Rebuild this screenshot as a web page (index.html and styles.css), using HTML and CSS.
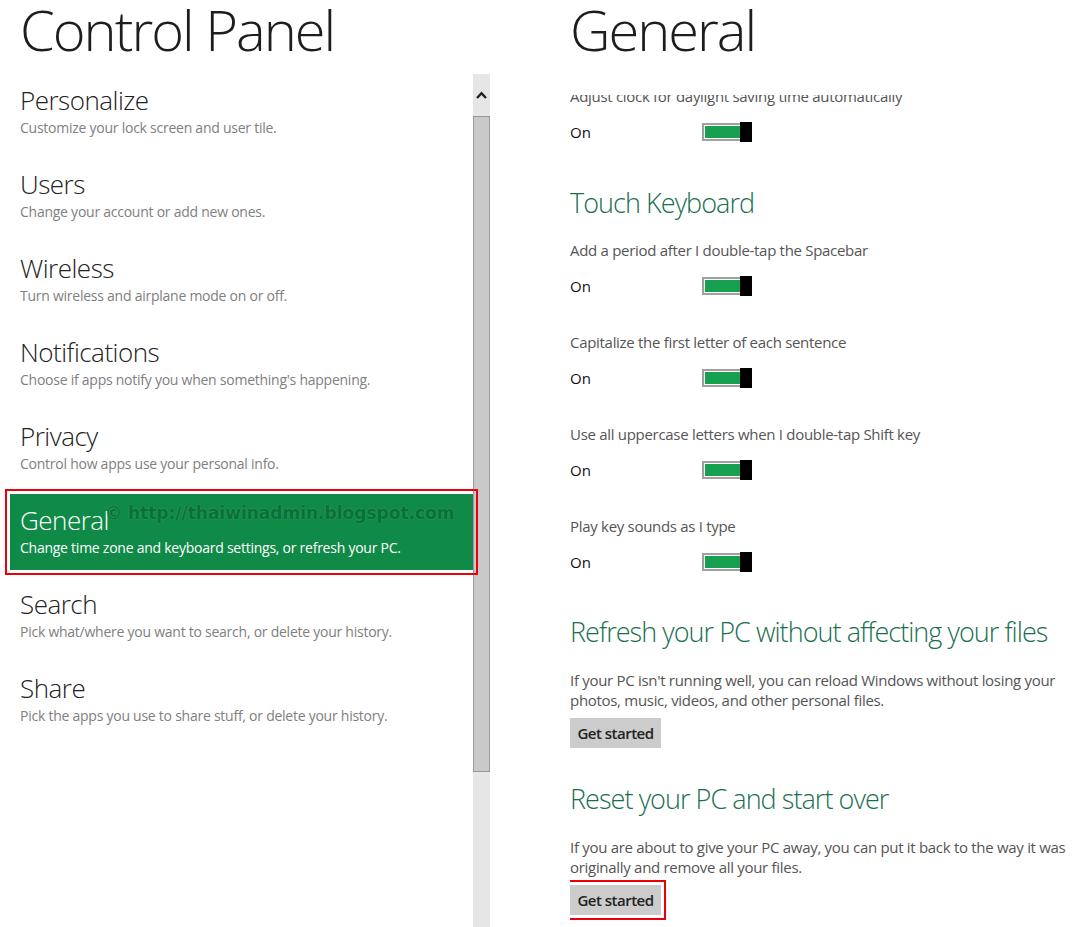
FILE: index.html
```html
<!DOCTYPE html>
<html lang="en">
<head>
    <meta charset="UTF-8">
    <title>Control Panel - General</title>
    <link rel="stylesheet" href="styles.css">
</head>
<body>
    <div class="page">
        <section class="pane pane-left">
            <h1 class="pane-title">Control Panel</h1>
            <div class="nav-wrap">
                <ul class="nav">
                    <li class="nav-item">
                        <div class="nav-name">Personalize</div>
                        <div class="nav-desc">Customize your lock screen and user tile.</div>
                    </li>
                    <li class="nav-item">
                        <div class="nav-name">Users</div>
                        <div class="nav-desc">Change your account or add new ones.</div>
                    </li>
                    <li class="nav-item">
                        <div class="nav-name">Wireless</div>
                        <div class="nav-desc">Turn wireless and airplane mode on or off.</div>
                    </li>
                    <li class="nav-item">
                        <div class="nav-name">Notifications</div>
                        <div class="nav-desc">Choose if apps notify you when something's happening.</div>
                    </li>
                    <li class="nav-item">
                        <div class="nav-name">Privacy</div>
                        <div class="nav-desc">Control how apps use your personal info.</div>
                    </li>
                    <li class="nav-item active">
                        <div class="nav-name">General</div>
                        <div class="nav-desc">Change time zone and keyboard settings, or refresh your PC.</div>
                        <span class="watermark">© http://thaiwinadmin.blogspot.com</span>
                    </li>
                    <li class="nav-item">
                        <div class="nav-name">Search</div>
                        <div class="nav-desc">Pick what/where you want to search, or delete your history.</div>
                    </li>
                    <li class="nav-item">
                        <div class="nav-name">Share</div>
                        <div class="nav-desc">Pick the apps you use to share stuff, or delete your history.</div>
                    </li>
                </ul>
                <div class="scrollbar">
                    <div class="scroll-up">
                        <svg width="11" height="8" viewBox="0 0 11 8"><path d="M1 7 L5.5 2.2 L10 7" fill="none" stroke="#222" stroke-width="2.4"/></svg>
                    </div>
                    <div class="scroll-thumb"></div>
                </div>
            </div>
        </section>

        <section class="pane pane-right">
            <h1 class="pane-title">General</h1>
            <div class="settings">
                <div class="settings-inner">
                    <div class="setting">
                        <div class="setting-label">Adjust clock for daylight saving time automatically</div>
                        <div class="setting-row">
                            <span class="setting-state">On</span>
                            <span class="toggle"><span class="toggle-track"></span><span class="toggle-thumb"></span></span>
                        </div>
                    </div>

                    <h2 class="group-title first">Touch Keyboard</h2>
                    <div class="setting">
                        <div class="setting-label">Add a period after I double-tap the Spacebar</div>
                        <div class="setting-row">
                            <span class="setting-state">On</span>
                            <span class="toggle"><span class="toggle-track"></span><span class="toggle-thumb"></span></span>
                        </div>
                    </div>
                    <div class="setting">
                        <div class="setting-label">Capitalize the first letter of each sentence</div>
                        <div class="setting-row">
                            <span class="setting-state">On</span>
                            <span class="toggle"><span class="toggle-track"></span><span class="toggle-thumb"></span></span>
                        </div>
                    </div>
                    <div class="setting">
                        <div class="setting-label">Use all uppercase letters when I double-tap Shift key</div>
                        <div class="setting-row">
                            <span class="setting-state">On</span>
                            <span class="toggle"><span class="toggle-track"></span><span class="toggle-thumb"></span></span>
                        </div>
                    </div>
                    <div class="setting">
                        <div class="setting-label">Play key sounds as I type</div>
                        <div class="setting-row">
                            <span class="setting-state">On</span>
                            <span class="toggle"><span class="toggle-track"></span><span class="toggle-thumb"></span></span>
                        </div>
                    </div>

                    <h2 class="group-title">Refresh your PC without affecting your files</h2>
                    <p class="group-text">If your PC isn't running well, you can reload Windows without losing your<br>photos, music, videos, and other personal files.</p>
                    <button class="btn">Get started</button>

                    <h2 class="group-title after-btn">Reset your PC and start over</h2>
                    <p class="group-text">If you are about to give your PC away, you can put it back to the way it was<br>originally and remove all your files.</p>
                    <button class="btn marked">Get started</button>
                </div>
            </div>
        </section>
    </div>
</body>
</html>
```

FILE: styles.css
```css
html, body {
    margin: 0;
    padding: 0;
    height: 100%;
}
body {
    font-family: 'Open Sans', 'Noto Sans', sans-serif;
    background: #ffffff;
    color: #222;
    overflow: hidden;
}
.page {
    display: grid;
    grid-template-columns: 490px 1fr;
    column-gap: 80px;
    height: 100vh;
}
.pane {
    display: flex;
    flex-direction: column;
    min-height: 0;
}
.pane-title {
    margin: 0;
    height: 74px;
    font-size: 56px;
    line-height: 58px;
    font-weight: 300;
    letter-spacing: -2px;
    color: #1d1d1d;
    white-space: nowrap;
}
.pane-left .pane-title {
    padding-left: 20px;
}
/* Left navigation */
.nav-wrap {
    flex: 1;
    display: flex;
    min-height: 0;
}
.nav {
    list-style: none;
    margin: 0;
    padding: 0 0 0 10px;
    flex: 1;
}
.nav-item {
    position: relative;
    box-sizing: border-box;
    height: 76px;
    margin-bottom: 8px;
    padding: 10px 10px 0;
}
.nav-name {
    font-size: 26px;
    line-height: 32px;
    font-weight: 300;
    letter-spacing: -0.5px;
    color: #222;
}
.nav-desc {
    margin-top: 2px;
    font-size: 14px;
    line-height: 20px;
    letter-spacing: -0.25px;
    color: #808080;
    white-space: nowrap;
}
.nav-item.active {
    background: #0f8a47;
    outline: 2px solid #e8000b;
    outline-offset: 3px;
}
.nav-item.active .nav-name,
.nav-item.active .nav-desc {
    color: #ffffff;
}
.watermark {
    position: absolute;
    left: 95px;
    top: 9px;
    font-family: 'DejaVu Sans', sans-serif;
    font-weight: bold;
    font-size: 17px;
    color: #0b7038;
    text-shadow: 0 0 2px rgba(70, 180, 110, 0.7);
    white-space: nowrap;
}
/* Scrollbar */
.scrollbar {
    width: 17px;
    background: #e6e6e6;
    display: flex;
    flex-direction: column;
}
.scroll-up {
    height: 42px;
    display: flex;
    align-items: center;
    justify-content: center;
}
.scroll-thumb {
    box-sizing: border-box;
    height: 656px;
    background: #c9c9c9;
    border: 1px solid #9a9a9a;
}
/* Right settings */
.settings {
    flex: 1;
    min-height: 0;
    margin-top: 21px;
    overflow: hidden;
}
.settings-inner {
    margin-top: -9px;
}
.setting + .setting {
    margin-top: 36px;
}
.setting-label {
    font-size: 15px;
    line-height: 20px;
    letter-spacing: -0.3px;
    color: #555;
    white-space: nowrap;
}
.setting-row {
    display: flex;
    align-items: center;
    height: 20px;
    margin-top: 16px;
}
.setting-state {
    width: 132px;
    font-size: 15px;
    line-height: 20px;
    color: #111;
}
.toggle {
    display: flex;
    align-items: center;
}
.toggle-track {
    box-sizing: border-box;
    width: 38px;
    height: 18px;
    border: 2px solid #a0a0a0;
    border-right: none;
    padding: 1px 0 1px 1px;
    background: #16a04f content-box;
}
.toggle-thumb {
    width: 12px;
    height: 20px;
    background: #000;
}
.group-title {
    margin: 42px 0 0;
    font-size: 27px;
    line-height: 36px;
    font-weight: 300;
    letter-spacing: -0.95px;
    color: #1b6f50;
    white-space: nowrap;
}
.group-title.first {
    margin-top: 43px;
    margin-bottom: 19px;
}
.group-title.after-btn {
    margin-top: 33px;
}
.group-text {
    margin: 20px 0 0;
    font-size: 15px;
    line-height: 20px;
    letter-spacing: -0.3px;
    color: #555;
    white-space: nowrap;
}
.btn {
    display: block;
    width: 91px;
    height: 30px;
    margin-top: 8px;
    padding: 0;
    border: none;
    background: #cccccc;
    font-family: 'Open Sans', 'Noto Sans', sans-serif;
    font-size: 15px;
    font-weight: 600;
    letter-spacing: -0.5px;
    color: #222;
}
.btn.marked {
    outline: 2px solid #e8000b;
    outline-offset: 3px;
}
```
